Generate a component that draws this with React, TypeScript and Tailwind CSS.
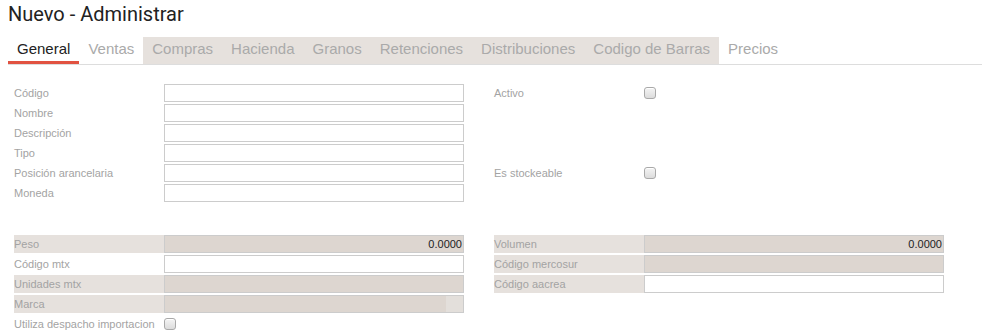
import React from "react";

const TABS = [
  "General",
  "Ventas",
  "Compras",
  "Hacienda",
  "Granos",
  "Retenciones",
  "Distribuciones",
  "Codigo de Barras",
  "Precios",
];

// tabs que aparecen con fondo gris (deshabilitadas)
const GRAY_TABS = ["Compras", "Hacienda", "Granos", "Retenciones", "Distribuciones", "Codigo de Barras"];

type Field = {
  label?: string;
  kind: "input" | "readonly" | "select" | "check" | "empty";
  value?: string;
  grayLabel?: boolean;
};

const Checkbox = () => (
  <span className="block h-[12px] w-[12px] rounded-[3px] border border-[#a9a9a9] bg-gradient-to-b from-[#f4f4f4] to-[#dcdcdc] shadow-[inset_0_1px_0_#fff]" />
);

const Row = ({ f }: { f: Field }) => {
  const gray = f.kind === "readonly" || f.kind === "select" || f.grayLabel;
  if (f.kind === "empty") return <div className="h-[18px]" />;
  return (
    <div className="flex h-[18px] items-center">
      <div
        className={`flex h-full w-[150px] items-center text-[11px] text-[#a3a3a3] ${
          gray ? "bg-[#e6e1dd]" : ""
        }`}
      >
        {f.label}
      </div>
      {f.kind === "input" && (
        <div className="h-full w-[300px] border border-[#cccccc] bg-white" />
      )}
      {f.kind === "readonly" && (
        <div className="flex h-full w-[300px] items-center justify-end border border-[#cccccc] bg-[#ddd6d0] pr-[1px] text-[11px] text-[#222]">
          {f.value}
        </div>
      )}
      {f.kind === "select" && (
        <div className="flex h-full w-[300px] border border-[#cccccc] bg-[#ddd6d0]">
          <div className="flex-1" />
          <div className="w-[17px] bg-[#e3dfdb]" />
        </div>
      )}
      {f.kind === "check" && <Checkbox />}
    </div>
  );
};

const Column = ({ fields }: { fields: Field[] }) => (
  <div className="flex w-[450px] flex-col gap-[2px]">
    {fields.map((f, i) => (
      <Row key={i} f={f} />
    ))}
  </div>
);

export default function App() {
  const topLeft: Field[] = [
    { label: "Código", kind: "input" },
    { label: "Nombre", kind: "input" },
    { label: "Descripción", kind: "input" },
    { label: "Tipo", kind: "input" },
    { label: "Posición arancelaria", kind: "input" },
    { label: "Moneda", kind: "input" },
  ];
  const topRight: Field[] = [
    { label: "Activo", kind: "check" },
    { kind: "empty" },
    { kind: "empty" },
    { kind: "empty" },
    { label: "Es stockeable", kind: "check" },
  ];
  const bottomLeft: Field[] = [
    { label: "Peso", kind: "readonly", value: "0.0000" },
    { label: "Código mtx", kind: "input" },
    { label: "Unidades mtx", kind: "readonly" },
    { label: "Marca", kind: "select" },
    { label: "Utiliza despacho importacion", kind: "check" },
  ];
  const bottomRight: Field[] = [
    { label: "Volumen", kind: "readonly", value: "0.0000" },
    { label: "Código mercosur", kind: "readonly" },
    { label: "Código aacrea", kind: "input", grayLabel: true },
  ];

  return (
    <div className="h-[334px] w-[982px] overflow-hidden bg-white font-['Liberation_Sans',Arial,sans-serif]">
      <h1 className="pl-[8px] pt-[1px] font-['Roboto',sans-serif] text-[20px] leading-[26px] text-[#222]">
        Nuevo - Administrar
      </h1>

      <div className="ml-[8px] mt-[10px] flex border-b border-[#dddddd]">
        {TABS.map((t) => (
          <div
            key={t}
            className={`flex h-[27px] flex-col px-[9px] text-[15px] ${
              GRAY_TABS.includes(t) ? "bg-[#e6e1dd]" : ""
            }`}
          >
            <div
              className={`flex h-[24px] items-center ${
                t === "General" ? "text-[#222]" : "text-[#aaaaaa]"
              }`}
            >
              {t}
            </div>
            {t === "General" && <div className="-mx-[9px] h-[3px] bg-[#e15241]" />}
          </div>
        ))}
      </div>

      <div className="mt-[19px] flex gap-[30px] pl-[14px]">
        <Column fields={topLeft} />
        <Column fields={topRight} />
      </div>

      <div className="mt-[33px] flex gap-[30px] pl-[14px]">
        <Column fields={bottomLeft} />
        <Column fields={bottomRight} />
      </div>
    </div>
  );
}
